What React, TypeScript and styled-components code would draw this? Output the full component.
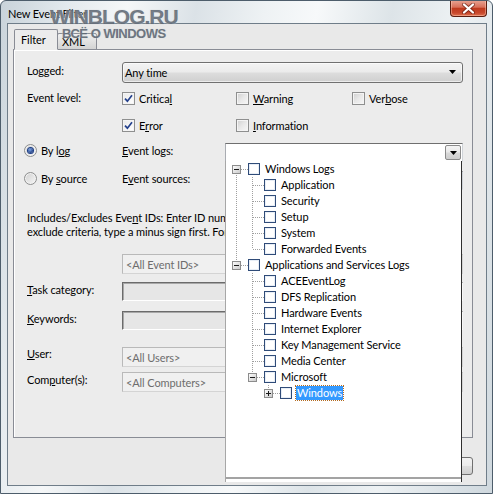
import React from 'react';
import styled, { createGlobalStyle } from 'styled-components';

const Global = createGlobalStyle`
  html, body { margin: 0; padding: 0; background: #ffffff; }
  body { font-family: Lato, "Noto Sans", sans-serif; font-size: 11px; letter-spacing: -0.1px; color: #000; }
  * { box-sizing: border-box; }
`;

const Window = styled.div`
  position: relative;
  width: 493px;
  height: 494px;
  display: flex;
  flex-direction: column;
  padding: 0 5px 7px 6px;
  border: 1px solid #4d5d6b;
  border-radius: 6px 6px 0 0;
  overflow: hidden;
  background: linear-gradient(
    100deg,
    #c9d3da 0%,
    #e4eaee 12%,
    #f5f7f8 22%,
    #dbe2e7 34%,
    #eef2f4 46%,
    #f7f9fa 55%,
    #dde4e8 68%,
    #eef2f4 80%,
    #cfd8de 100%
  );
`;

const TitleBar = styled.div`
  height: 22px;
  display: flex;
  align-items: flex-start;
  justify-content: space-between;
  flex-shrink: 0;
`;

const Title = styled.div`
  padding: 6px 0 0 1px;
  font-size: 11px;
  color: #000;
`;

const CloseButton = styled.div`
  width: 37px;
  height: 17px;
  margin: -1px 0 0 0;
  border: 1px solid #5b1d10;
  border-top: none;
  border-radius: 0 0 4px 4px;
  background: linear-gradient(#e9a796 0%, #d9705a 45%, #bf3a1e 52%, #c8482c 80%, #e0704f 100%);
  box-shadow: inset 0 0 0 1px rgba(255, 210, 190, 0.45);
  display: flex;
  align-items: center;
  justify-content: center;
`;

const Watermark = styled.div`
  position: absolute;
  left: 49px;
  top: 3px;
  display: flex;
  flex-direction: column;
  align-items: center;
  font-family: "Liberation Sans", Arial, sans-serif;
  font-weight: bold;
  letter-spacing: 0;
  color: rgba(58, 70, 84, 0.68);
  text-shadow: 0 0 2px rgba(255, 255, 255, 0.9), 0 0 1px rgba(58, 70, 84, 0.6);
  pointer-events: none;
  z-index: 20;
`;

const WmBig = styled.div`
  font-size: 21px;
  line-height: 25px;
  letter-spacing: -1px;
`;

const WmSmall = styled.div`
  font-size: 13px;
  line-height: 13px;
  letter-spacing: -0.5px;
  margin-top: -2px;
`;

const Client = styled.div`
  flex: 1;
  position: relative;
  display: flex;
  flex-direction: column;
  background: #e9e9e9;
  border: 1px solid #6f7d89;
  padding: 5px 13px 0 5px;
`;

const Tabs = styled.div`
  display: flex;
  align-items: flex-end;
  height: 21px;
  margin: 0 0 -1px 1px;
  position: relative;
  z-index: 2;
`;

const Tab = styled.div<{ $active?: boolean }>`
  height: ${(p) => (p.$active ? '21px' : '17px')};
  width: ${(p) => (p.$active ? '44px' : '40px')};
  margin-left: ${(p) => (p.$active ? '0' : '-1px')};
  padding-left: ${(p) => (p.$active ? '6px' : '4px')};
  border: 1px solid #898c95;
  border-bottom: ${(p) => (p.$active ? '1px solid #ececec' : '1px solid #898c95')};
  border-radius: 2px 2px 0 0;
  background: ${(p) => (p.$active ? '#ececec' : 'linear-gradient(#f0f0f0, #d3d3d3)')};
  position: relative;
  z-index: ${(p) => (p.$active ? 2 : 1)};
  display: flex;
  align-items: center;
  padding-bottom: ${(p) => (p.$active ? '1px' : '0')};
`;

const Panel = styled.div`
  width: 460px;
  height: 389px;
  flex-shrink: 0;
  border: 1px solid #898c95;
  background: #ececec;
  box-shadow: inset 1px 1px 0 #ffffff;
  padding: 0 9px 0 13px;
  display: flex;
  flex-direction: column;
`;

const Row = styled.div<{ $mt: number; $h: number }>`
  display: flex;
  align-items: center;
  margin-top: ${(p) => p.$mt}px;
  height: ${(p) => p.$h}px;
  flex-shrink: 0;
`;

const TopRow = styled.div<{ $mt: number }>`
  display: flex;
  align-items: flex-start;
  margin-top: ${(p) => p.$mt}px;
  flex-shrink: 0;
`;

const Label = styled.div<{ $w?: number; $dy?: number }>`
  width: ${(p) => p.$w ?? 95}px;
  flex-shrink: 0;
  line-height: 15px;
  position: relative;
  top: ${(p) => p.$dy ?? 0}px;
  white-space: nowrap;
`;

const U = styled.span`
  text-decoration: underline;
  text-underline-offset: 1px;
`;

const GrayCombo = styled.div`
  flex: 1;
  height: 100%;
  border: 1px solid #707070;
  border-radius: 3px;
  background: linear-gradient(#f3f3f3 0%, #ebebeb 48%, #dddddd 52%, #cfcfcf 100%);
  box-shadow: inset 0 0 0 1px rgba(255, 255, 255, 0.6);
  display: flex;
  align-items: center;
  justify-content: space-between;
  padding: 0 6px 1px 2px;
`;

const ChecksGrid = styled.div`
  display: grid;
  grid-template-columns: 114px 116px auto;
  grid-auto-rows: 15px;
  row-gap: 12px;
`;

const CheckItem = styled.div`
  display: flex;
  align-items: center;
  gap: 4px;
  white-space: nowrap;
  line-height: 15px;
`;

const Box = styled.span<{ $checked?: boolean }>`
  width: 13px;
  height: 13px;
  flex-shrink: 0;
  border: 1px solid #8e8f8f;
  background: ${(p) =>
    p.$checked
      ? 'linear-gradient(135deg, #e9e9e9, #ffffff)'
      : 'linear-gradient(135deg, #cfcfcf 0%, #e8e8e8 50%, #f7f7f7 100%)'};
  box-shadow: inset 0 0 0 1px #f4f4f4;
  display: inline-flex;
  align-items: center;
  justify-content: center;
`;

const RadioGroup = styled.div<{ $dy?: number }>`
  width: 98px;
  margin-left: -3px;
  display: flex;
  align-items: center;
  gap: 4px;
  flex-shrink: 0;
  position: relative;
  top: ${(p) => p.$dy ?? 0}px;
`;

const RadioCircle = styled.span`
  width: 13px;
  height: 13px;
  border-radius: 50%;
  border: 1px solid #8e8f8f;
  background: linear-gradient(135deg, #cfcfcf, #f7f7f7);
  box-shadow: inset 0 0 0 1px #f2f2f2;
  display: inline-flex;
  align-items: center;
  justify-content: center;
  flex-shrink: 0;
`;

const RadioDot = styled.span`
  width: 5px;
  height: 5px;
  border-radius: 50%;
  background: radial-gradient(circle at 40% 35%, #7fa8e8, #17347a 80%);
  box-shadow: 0 0 0 1px #1b3d86;
`;

const WhiteCombo = styled.div`
  flex: 1;
  height: 100%;
  position: relative;
  background: #ffffff;
  border: 1px solid;
  border-color: #6f6f6f #cfd3d8 #e3e9ef #a9acb2;
  display: flex;
  align-items: center;
  justify-content: flex-end;
  padding-right: 1px;
`;

const ComboBtn = styled.div`
  width: 16px;
  height: 15px;
  border: 1px solid #8a8a8a;
  border-radius: 2px;
  background: linear-gradient(#f4f4f4 0%, #e9e9e9 48%, #d9d9d9 52%, #cdcdcd 100%);
  display: flex;
  align-items: center;
  justify-content: center;
`;

const Para = styled.div<{ $mt: number }>`
  margin-top: ${(p) => p.$mt}px;
  line-height: 14px;
  white-space: nowrap;
  overflow: hidden;
  flex-shrink: 0;
`;

const InputBox = styled.div<{ $sunken?: boolean }>`
  flex: 1;
  height: 100%;
  display: flex;
  align-items: center;
  padding-left: 3px;
  color: #6d6d6d;
  background: ${(p) => (p.$sunken ? '#e6e6e6' : '#f0f0f0')};
  border: 1px solid;
  border-color: ${(p) => (p.$sunken ? '#6b6b6b #f7f7f7 #ffffff #6b6b6b' : '#b9b9b9 #d4d4d4 #d4d4d4 #b9b9b9')};
  box-shadow: ${(p) => (p.$sunken ? 'inset 1px 1px 0 #a8a8a8' : 'none')};
`;

const Buttons = styled.div`
  display: flex;
  justify-content: flex-end;
  gap: 6px;
  margin-top: 19px;
`;

const DlgButton = styled.div`
  width: 75px;
  height: 18px;
  border: 1px solid #707070;
  border-radius: 3px;
  background: linear-gradient(#f2f2f2 0%, #ebebeb 48%, #dddddd 52%, #cfcfcf 100%);
  display: flex;
  align-items: center;
  justify-content: center;
`;

const Dropdown = styled.div`
  position: absolute;
  left: -1px;
  top: 17px;
  width: 237px;
  height: 321px;
  background: #ffffff;
  border-left: 1px solid #a7a7a7;
  border-right: 1px solid #2f2f2f;
  padding-bottom: 3px;
  z-index: 10;
  display: flex;
  flex-direction: column;
`;

const TreeList = styled.div`
  flex: 1;
  padding: 0 0 0 6px;
  border-bottom: 2px solid #a3a3a3;
`;

const TreeRow = styled.div`
  height: 16px;
  display: flex;
  align-items: center;
`;

const TreeBox = styled.span`
  width: 12px;
  height: 12px;
  flex-shrink: 0;
  border: 1px solid #2f4b78;
  box-shadow: inset 0 0 0 1px #e8eef6;
  background: #ffffff;
  margin-right: 5px;
`;

const TreeText = styled.span<{ $sel?: boolean }>`
  white-space: nowrap;
  line-height: 14px;
  padding: 0 ${(p) => (p.$sel ? '1px' : '0')};
  margin-left: ${(p) => (p.$sel ? '-1px' : '0')};
  background: ${(p) => (p.$sel ? '#3399ff' : 'transparent')};
  color: ${(p) => (p.$sel ? '#ffffff' : '#000000')};
  outline: ${(p) => (p.$sel ? '1px dotted #b36b20' : 'none')};
`;

type Own = { up: boolean; down: boolean; exp?: '-' | '+' };

const GuideCell: React.FC<{ line?: boolean; own?: Own }> = ({ line, own }) => (
  <svg width="16" height="16" viewBox="0 0 16 16" style={{ flexShrink: 0, display: 'block' }}>
    <g stroke="#a0a0a0" strokeWidth="1" strokeDasharray="1 1" fill="none">
      {line && <line x1="4.5" y1="0" x2="4.5" y2="16" />}
      {own && own.up && <line x1="4.5" y1="0" x2="4.5" y2="8" />}
      {own && own.down && <line x1="4.5" y1="8" x2="4.5" y2="16" />}
      {own && <line x1="5" y1="8.5" x2="16" y2="8.5" />}
    </g>
    {own && own.exp && (
      <g>
        <defs>
          <linearGradient id="expg" x1="0" y1="0" x2="1" y2="1">
            <stop offset="0" stopColor="#ffffff" />
            <stop offset="1" stopColor="#c8c8c8" />
          </linearGradient>
        </defs>
        <rect x="0.5" y="4.5" width="8" height="8" fill="url(#expg)" stroke="#8c8c8c" />
        <line x1="2" y1="8.5" x2="7" y2="8.5" stroke="#1a1a1a" />
        {own.exp === '+' && <line x1="4.5" y1="6" x2="4.5" y2="11" stroke="#1a1a1a" />}
      </g>
    )}
  </svg>
);

type TreeItem = { label: string; anc: boolean[]; own: Own; sel?: boolean };

const treeItems: TreeItem[] = [
  { label: 'Windows Logs', anc: [], own: { up: false, down: true, exp: '-' } },
  { label: 'Application', anc: [true], own: { up: true, down: true } },
  { label: 'Security', anc: [true], own: { up: true, down: true } },
  { label: 'Setup', anc: [true], own: { up: true, down: true } },
  { label: 'System', anc: [true], own: { up: true, down: true } },
  { label: 'Forwarded Events', anc: [true], own: { up: true, down: false } },
  { label: 'Applications and Services Logs', anc: [], own: { up: true, down: false, exp: '-' } },
  { label: 'ACEEventLog', anc: [false], own: { up: true, down: true } },
  { label: 'DFS Replication', anc: [false], own: { up: true, down: true } },
  { label: 'Hardware Events', anc: [false], own: { up: true, down: true } },
  { label: 'Internet Explorer', anc: [false], own: { up: true, down: true } },
  { label: 'Key Management Service', anc: [false], own: { up: true, down: true } },
  { label: 'Media Center', anc: [false], own: { up: true, down: true } },
  { label: 'Microsoft', anc: [false], own: { up: true, down: false, exp: '-' } },
  { label: 'Windows', anc: [false, false], own: { up: true, down: false, exp: '+' }, sel: true },
];

const Check: React.FC = () => (
  <svg width="9" height="9" viewBox="0 0 9 9">
    <path d="M1 4.6 L3.4 7.2 L8 1.2" stroke="#24418c" strokeWidth="1.7" fill="none" />
  </svg>
);

const Arrow: React.FC = () => (
  <svg width="7" height="4" viewBox="0 0 7 4">
    <path d="M0 0 H7 L3.5 4 Z" fill="#000" />
  </svg>
);

const CheckBox: React.FC<{ checked?: boolean; children: React.ReactNode }> = ({ checked, children }) => (
  <CheckItem>
    <Box $checked={checked}>{checked && <Check />}</Box>
    <span>{children}</span>
  </CheckItem>
);

export default function App() {
  return (
    <>
      <Global />
      <Window>
        <Watermark>
          <WmBig>WINBLOG.RU</WmBig>
          <WmSmall>ВСЁ О WINDOWS</WmSmall>
        </Watermark>
        <TitleBar>
          <Title>New Event Filter</Title>
          <CloseButton>
            <svg width="13" height="11" viewBox="0 0 13 11">
              <path
                d="M2 1.5 L11 9.5 M11 1.5 L2 9.5"
                stroke="#5a1a10"
                strokeWidth="4"
                strokeLinecap="round"
                opacity="0.6"
              />
              <path d="M2 1.5 L11 9.5 M11 1.5 L2 9.5" stroke="#ffffff" strokeWidth="2.2" strokeLinecap="round" />
            </svg>
          </CloseButton>
        </TitleBar>
        <Client>
          <Tabs>
            <Tab $active>Filter</Tab>
            <Tab>XML</Tab>
          </Tabs>
          <Panel>
            <Row $mt={12} $h={21}>
              <Label $dy={-2}>Logged:</Label>
              <GrayCombo>
                <span>Any time</span>
                <Arrow />
              </GrayCombo>
            </Row>
            <TopRow $mt={8}>
              <Label $dy={-1}>Event level:</Label>
              <ChecksGrid>
                <CheckBox checked>
                  Critica<U>l</U>
                </CheckBox>
                <CheckBox>
                  <U>W</U>arning
                </CheckBox>
                <CheckBox>
                  Ver<U>b</U>ose
                </CheckBox>
                <CheckBox checked>
                  E<U>r</U>ror
                </CheckBox>
                <CheckBox>
                  <U>I</U>nformation
                </CheckBox>
              </ChecksGrid>
            </TopRow>
            <Row $mt={10} $h={19}>
              <RadioGroup $dy={-2}>
                <RadioCircle>
                  <RadioDot />
                </RadioCircle>
                <span>
                  By l<U>o</U>g
                </span>
              </RadioGroup>
              <Label $w={103} $dy={-2}>
                <U>E</U>vent logs:
              </Label>
              <WhiteCombo>
                <ComboBtn>
                  <Arrow />
                </ComboBtn>
                <Dropdown>
                  <TreeList>
                    {treeItems.map((it) => (
                      <TreeRow key={it.label}>
                        {it.anc.map((l, i) => (
                          <GuideCell key={i} line={l} />
                        ))}
                        <GuideCell own={it.own} />
                        <TreeBox />
                        <TreeText $sel={it.sel}>{it.label}</TreeText>
                      </TreeRow>
                    ))}
                  </TreeList>
                </Dropdown>
              </WhiteCombo>
            </Row>
            <Row $mt={9} $h={19}>
              <RadioGroup $dy={-2}>
                <RadioCircle />
                <span>
                  By <U>s</U>ource
                </span>
              </RadioGroup>
              <Label $w={103} $dy={-2}>
                E<U>v</U>ent sources:
              </Label>
              <WhiteCombo>
                <ComboBtn>
                  <Arrow />
                </ComboBtn>
              </WhiteCombo>
            </Row>
            <Para $mt={21}>
              Includes/Excludes Eve<U>n</U>t IDs: Enter ID numbers and/or ID ranges separated by commas. To
              <br />
              exclude criteria, type a minus sign first. For example 1,3,5-99,-76
            </Para>
            <Row $mt={15} $h={20}>
              <Label />
              <InputBox>&lt;All Event IDs&gt;</InputBox>
            </Row>
            <Row $mt={8} $h={19}>
              <Label $dy={-2}>
                <U>T</U>ask category:
              </Label>
              <InputBox $sunken />
            </Row>
            <Row $mt={10} $h={19}>
              <Label $dy={-2}>
                <U>K</U>eywords:
              </Label>
              <InputBox $sunken />
            </Row>
            <Row $mt={17} $h={20}>
              <Label $dy={-4}>
                <U>U</U>ser:
              </Label>
              <InputBox>&lt;All Users&gt;</InputBox>
            </Row>
            <Row $mt={5} $h={20}>
              <Label $dy={-3}>
                Com<U>p</U>uter(s):
              </Label>
              <InputBox>&lt;All Computers&gt;</InputBox>
            </Row>
          </Panel>
          <Buttons>
            <DlgButton>OK</DlgButton>
            <DlgButton>Cancel</DlgButton>
          </Buttons>
        </Client>
      </Window>
    </>
  );
}
